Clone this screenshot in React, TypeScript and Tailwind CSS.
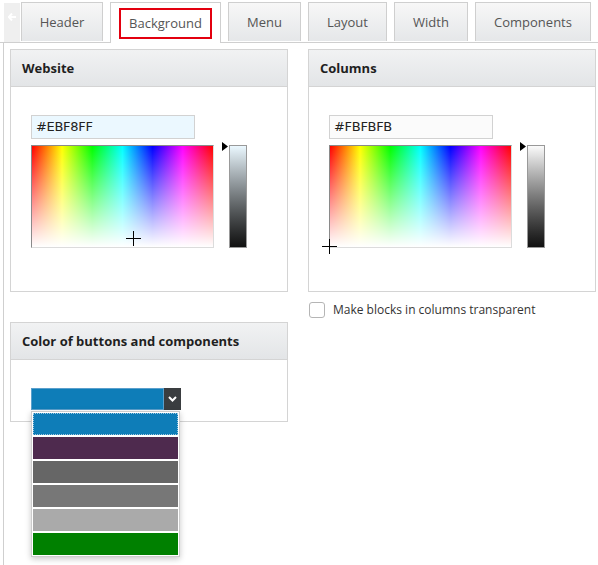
import React from "react";

// Theme settings: Background tab

const TABS = [
  { label: "Header", w: "w-[82px]" },
  { label: "Background", w: "w-[111px]", active: true },
  { label: "Menu", w: "w-[73px]" },
  { label: "Layout", w: "w-[79px]" },
  { label: "Width", w: "w-[74px]" },
  { label: "Components", w: "w-[116px]" },
  { label: "", w: "w-[40px]" },
];

const SWATCHES = ["bg-[#0e7db8]", "bg-[#4e2a4e]", "bg-[#666666]", "bg-[#777777]", "bg-[#aaaaaa]", "bg-[#008000]"];

function Panel({ title, children }: { title: string; children: React.ReactNode }) {
  return (
    <div className="border border-[#d4d4d4] bg-white">
      <div className="h-[37px] flex items-center px-[11px] pt-[1px] bg-gradient-to-b from-[#f1f2f3] to-[#e3e5e7] border-b border-[#d4d4d4] text-[13px] font-bold text-[#1f1f1f]">
        {title}
      </div>
      {children}
    </div>
  );
}

function Picker({ hex, bg, barTop, cross }: { hex: string; bg: string; barTop: string; cross: string }) {
  return (
    <div className="pt-[28px] pl-[20px] h-[204px]">
      <div className={`w-[164px] h-[24px] border border-[#d2d2d2] ${bg} text-[13px] text-[#222] flex items-center pl-[4px] font-['DejaVu_Sans',sans-serif] tracking-[-0.3px]`}>
        {hex}
      </div>
      <div className="flex mt-[6px]">
        <div className="relative w-[183px] h-[103px] border-t border-l border-[#8a8a8a] border-r border-b border-r-[#dcdcdc] border-b-[#dcdcdc] bg-[linear-gradient(to_right,#ff0000,#ffff00_16.6%,#00ff00_33.3%,#00ffff_50%,#0000ff_66.6%,#ff00ff_83.3%,#ff0000)]">
          <div className="absolute inset-0 bg-gradient-to-b from-transparent to-white" />
          <div className={`absolute ${cross} w-[15px] h-[15px]`}>
            <div className="absolute left-[7px] top-0 w-px h-[15px] bg-black" />
            <div className="absolute top-[7px] left-0 h-px w-[15px] bg-black" />
          </div>
        </div>
        <div className="relative ml-[15px]">
          <svg className="absolute -left-[7px] -top-[3px]" width="6" height="9" viewBox="0 0 6 9">
            <path d="M0 0 L6 4.5 L0 9 Z" fill="#000" />
          </svg>
          <div className={`w-[18px] h-[103px] border border-[#999] bg-gradient-to-b ${barTop} to-[#111]`} />
        </div>
      </div>
    </div>
  );
}

export default function App() {
  return (
    <div className="w-[598px] h-[565px] bg-white overflow-hidden font-['Open_Sans',sans-serif]">
      {/* tabs */}
      <div className="flex items-end h-[43px] pl-[4px] pt-[3px] border-b border-[#cfcfcf] relative">
        <div className="w-[16px] h-[39px] shrink-0 bg-[#efefef] flex justify-center pt-[10px] mr-[1px]">
          <svg width="8" height="8" viewBox="0 0 8 8">
            <path d="M4 0.5 L0.8 4 L4 7.5 M1 4 H8" stroke="#fff" strokeWidth="2" fill="none" />
          </svg>
        </div>
        <div className="flex gap-[7px]">
          {TABS.map((t, i) =>
            t.active ? (
              <div
                key={i}
                className={`${t.w} shrink-0 h-[41px] -mb-px bg-white border border-b-0 border-[#cfcfcf] flex items-start justify-center pt-[5px]`}
              >
                <div className="w-[93px] h-[31px] border-2 border-[#e3000f] flex items-center justify-center pt-[1px] text-[13px] text-[#555]">
                  {t.label}
                </div>
              </div>
            ) : (
              <div
                key={i}
                className={`${t.w} shrink-0 h-[39px] bg-gradient-to-b from-[#f7f7f7] to-[#e5e7e9] border border-b-0 border-[#cfcfcf] flex items-center justify-center pt-[2px] text-[13px] text-[#555]`}
              >
                {t.label}
              </div>
            )
          )}
        </div>
      </div>

      {/* body */}
      <div className="ml-[3px] h-[522px] border-l border-[#cfcfcf] pl-[6px] pt-[6px] flex gap-[20px]">
        <div className="w-[278px] flex flex-col gap-[30px]">
          <Panel title="Website">
            <Picker hex="#EBF8FF" bg="bg-[#ebf8ff]" barTop="from-[#ebf8ff]" cross="left-[94px] top-[85px]" />
          </Panel>
          <Panel title="Color of buttons and components">
            <div className="h-[61px] pt-[28px] pl-[20px]">
              <div className="relative w-[150px]">
                <div className="flex h-[22px]">
                  <div className="flex-1 bg-[#0e7db8] border border-[#5a9fcc]" />
                  <div className="w-[17px] bg-[#3a3d40] flex items-center justify-center">
                    <svg width="9" height="6" viewBox="0 0 9 6">
                      <path d="M1 1 L4.5 4.5 L8 1" stroke="#fff" strokeWidth="2" fill="none" />
                    </svg>
                  </div>
                </div>
                <div className="absolute left-0 top-[23px] w-[149px] bg-white border border-[#cccccc] shadow-[0_2px_6px_rgba(0,0,0,0.22)] p-px flex flex-col gap-[2px] z-10">
                  {SWATCHES.map((c, i) => (
                    <div
                      key={i}
                      className={`h-[22px] ${c} ${i === 0 ? "outline-1 outline-dotted outline-[#9ec8e0] -outline-offset-1" : ""}`}
                    />
                  ))}
                </div>
              </div>
            </div>
          </Panel>
        </div>

        <div className="w-[288px] flex flex-col">
          <Panel title="Columns">
            <Picker hex="#FBFBFB" bg="bg-[#fbfbfb]" barTop="from-[#fbfbfb]" cross="-left-[8px] top-[93px]" />
          </Panel>
          <label className="flex items-center gap-[8px] mt-[9px] ml-[1px]">
            <span className="w-[16px] h-[16px] border border-[#b5b5b5] rounded-[3px] bg-white" />
            <span className="text-[12px] text-[#333]">Make blocks in columns transparent</span>
          </label>
        </div>
      </div>
    </div>
  );
}
